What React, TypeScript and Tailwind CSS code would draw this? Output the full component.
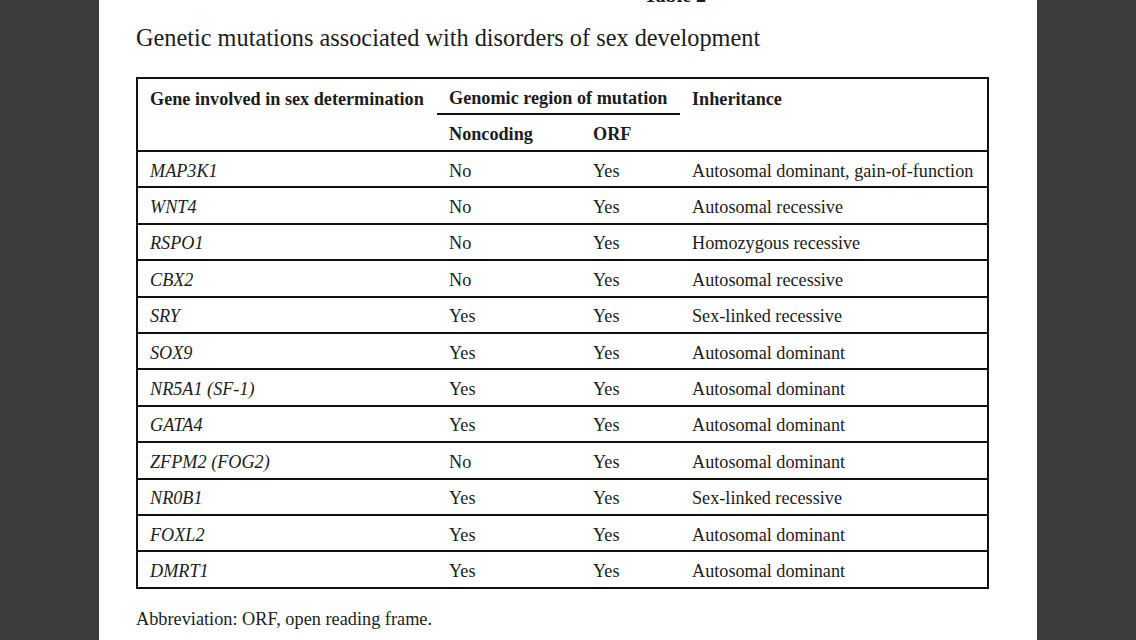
const rows: [string, string, string, string][] = [
  ['MAP3K1', 'No', 'Yes', 'Autosomal dominant, gain-of-function'],
  ['WNT4', 'No', 'Yes', 'Autosomal recessive'],
  ['RSPO1', 'No', 'Yes', 'Homozygous recessive'],
  ['CBX2', 'No', 'Yes', 'Autosomal recessive'],
  ['SRY', 'Yes', 'Yes', 'Sex-linked recessive'],
  ['SOX9', 'Yes', 'Yes', 'Autosomal dominant'],
  ['NR5A1 (SF-1)', 'Yes', 'Yes', 'Autosomal dominant'],
  ['GATA4', 'Yes', 'Yes', 'Autosomal dominant'],
  ['ZFPM2 (FOG2)', 'No', 'Yes', 'Autosomal dominant'],
  ['NR0B1', 'Yes', 'Yes', 'Sex-linked recessive'],
  ['FOXL2', 'Yes', 'Yes', 'Autosomal dominant'],
  ['DMRT1', 'Yes', 'Yes', 'Autosomal dominant'],
];

const cols = 'grid grid-cols-[299px_144px_99px_1fr]';

export default function App() {
  return (
    <div className="flex h-[640px] w-[1136px] overflow-hidden bg-[#3c3c3c] font-['Liberation_Serif',serif] text-[#1c1c1c]">
      <div className="w-[99px] shrink-0" />
      <main className="w-[938px] shrink-0 bg-white pl-[37px]">
        <div className="-mt-[15px] h-[20px] pl-[508px] text-[20px] font-bold leading-[20px]">Table 2</div>
        <h1 className="mt-[19px] text-[24.3px] leading-[28px]">
          Genetic mutations associated with disorders of sex development
        </h1>
        <div className="mt-[25px] w-[853px] border-2 border-[#111] text-[18.2px] leading-[20px]">
          <div className={`${cols} h-[36px] items-center pt-[3px] font-bold`}>
            <div className="pl-3">Gene involved in sex determination</div>
            <div className="col-span-2 flex h-full items-center border-b-2 border-[#111] pl-3">
              Genomic region of mutation
            </div>
            <div className="pl-3">Inheritance</div>
          </div>
          <div className={`${cols} h-[35px] items-center pt-[3px] font-bold`}>
            <div />
            <div className="pl-3">Noncoding</div>
            <div className="pl-3">ORF</div>
            <div />
          </div>
          {rows.map(([gene, nc, orf, inh]) => (
            <div key={gene} className={`${cols} h-[36.4px] items-center border-t-2 border-[#111] pt-[3px]`}>
              <div className="pl-3 italic">{gene}</div>
              <div className="pl-3">{nc}</div>
              <div className="pl-3">{orf}</div>
              <div className="pl-3">{inh}</div>
            </div>
          ))}
        </div>
        <p className="mt-[20px] text-[18.3px] leading-[20px]">Abbreviation: ORF, open reading frame.</p>
      </main>
      <div className="flex-1" />
    </div>
  );
}
